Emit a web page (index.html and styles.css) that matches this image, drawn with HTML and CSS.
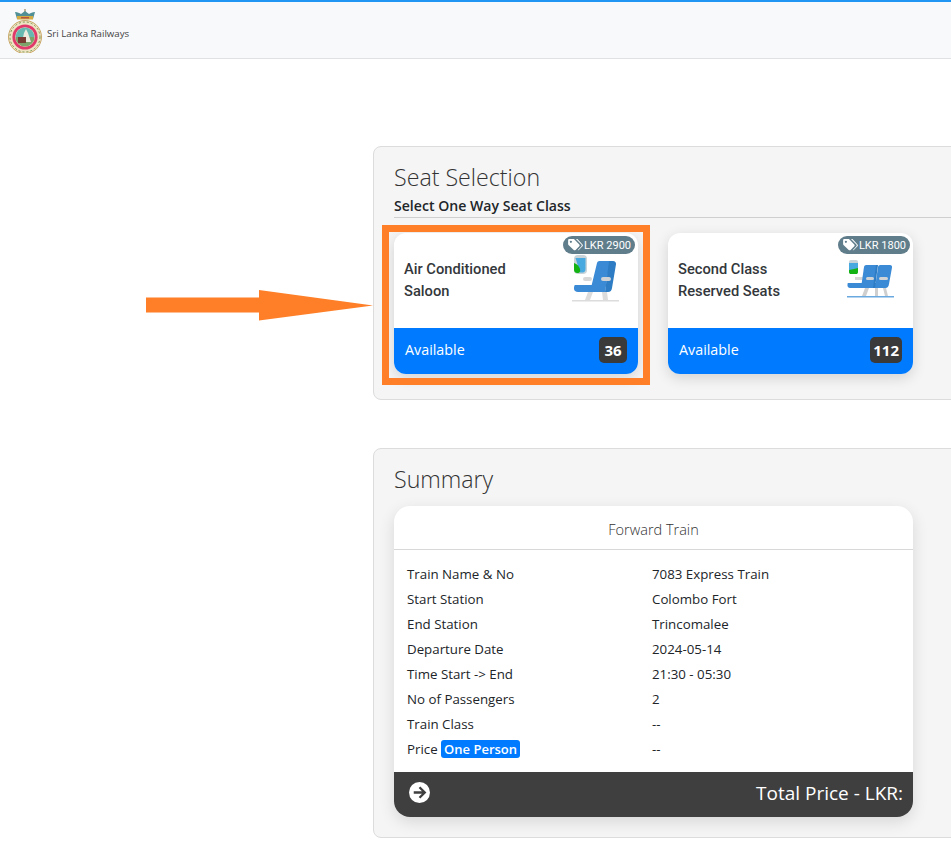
FILE: index.html
```html
<!DOCTYPE html>
<html lang="en">
<head>
<meta charset="utf-8">
<title>Sri Lanka Railways</title>
<link rel="stylesheet" href="styles.css">
</head>
<body>
<header class="topbar">
  <svg class="logo" viewBox="0 0 36 44" width="36" height="44" aria-hidden="true">
    <path d="M18 0v3" stroke="#8a6d3b" stroke-width="1"/>
    <path d="M8 3c3 0 4 1 6 2l4-3 4 3c2-1 3-2 6-2l-2 7H10z" fill="#4f8f95"/>
    <path d="M10 7h16v3.500H10z" fill="#d2ab45"/>
    <path d="M14 8h8v1.500h-8z" fill="#b5533f"/>
    <circle cx="18" cy="28" r="16.500" fill="#efe3c4" stroke="#c9a86a"/>
    <circle cx="18" cy="28" r="15" fill="none" stroke="#7b9a52" stroke-width="1" stroke-dasharray="2 2"/>
    <circle cx="18" cy="28" r="12.600" fill="#e03a6a"/>
    <circle cx="18" cy="28" r="9.800" fill="#f2e8cc"/>
    <path d="M8.500 28a9.500 9.500 0 0 1 19 0z" fill="#66b8b0"/>
    <path d="M8.500 28a9.500 9.500 0 0 0 19 0z" fill="#7da36a"/>
    <path d="M15 33l2-9 2-4 2 4 3 9z" fill="#ece9dd"/>
    <rect x="11" y="28" width="8" height="6" fill="#7a3b34"/>
  </svg>
  <span class="brand">Sri Lanka Railways</span>
</header>

<main class="content">
  <section class="panel panel-seats">
    <h2 class="panel-title">Seat Selection</h2>
    <h3 class="panel-sub">Select One Way Seat Class</h3>
    <div class="class-list">
      <article class="class-card is-marked">
        <div class="class-body">
          <span class="price"><svg class="tag" viewBox="0 0 16 13" width="15" height="12" aria-hidden="true"><path d="M0 1.400C0 .6.6 0 1.400 0h4.200c.4 0 .7.1 1 .4l5.500 5.500c.5.500.5 1.400 0 2l-4 4c-.6.500-1.500.500-2 0L.4 6.400C.1 6.100 0 5.800 0 5.400zM3 4.300a1.200 1.200 0 1 0 0-2.400 1.200 1.200 0 0 0 0 2.400z" fill="#fff"/><path d="M8.500 0h.9c.4 0 .7.1 1 .4l5.200 5.500c.5.500.5 1.400 0 2l-4 4c-.3.300-.8.400-1.200.400l4-4.400c.5-.6.500-1.400 0-1.900z" fill="#fff"/></svg>LKR 2900</span>
          <div class="class-name">Air Conditioned<br>Saloon</div>
          <svg class="seat" viewBox="0 0 50 48" width="50" height="48" aria-hidden="true">
            <rect x="2" y="0" width="13" height="19" rx="4" fill="#c7d3d8"/>
            <path d="M3.500 3h10v11c0 2-1 3.500-3 3.500H8z" fill="#47a9e0"/>
            <path d="M2 8c3 1 5 3 6 6 .5 2 0 4-2 4-3 0-4-1-4-4z" fill="#12b312"/>
            <rect x="11" y="22" width="9" height="4" rx="2" fill="#d8d8d8"/>
            <path d="M16 37h5l-3 8h-5zM30 37h5l1 8h-5z" fill="#dcdcdc"/>
            <rect x="0" y="45" width="47" height="1.500" fill="#dcdcdc"/>
            <path d="M3 30h20v7H6c-2.500 0-4-1.500-4-3.500S2.500 30 3 30z" fill="#3a8ad6"/>
            <path d="M25 8c.3-1.300 1.300-2 2.500-2H38l-5 31H18z" fill="#3a8ad6"/>
            <path d="M37 6h4c2 0 3.300 1.300 3 3.300L40 33c-.4 2.500-1.500 4-4 4h-3z" fill="#2d7cc4"/>
            <rect x="29" y="22" width="10" height="4" rx="2" fill="#cfd3d6"/>
          </svg>
        </div>
        <div class="class-foot">
          <span class="avail">Available</span>
          <span class="count">36</span>
        </div>
      </article>

      <article class="class-card">
        <div class="class-body">
          <span class="price"><svg class="tag" viewBox="0 0 16 13" width="15" height="12" aria-hidden="true"><path d="M0 1.400C0 .6.6 0 1.400 0h4.200c.4 0 .7.1 1 .4l5.500 5.500c.5.500.5 1.400 0 2l-4 4c-.6.500-1.500.500-2 0L.4 6.400C.1 6.100 0 5.800 0 5.400zM3 4.300a1.200 1.200 0 1 0 0-2.400 1.200 1.200 0 0 0 0 2.400z" fill="#fff"/><path d="M8.500 0h.9c.4 0 .7.1 1 .4l5.200 5.500c.5.500.5 1.400 0 2l-4 4c-.3.300-.8.400-1.200.400l4-4.400c.5-.6.500-1.400 0-1.900z" fill="#fff"/></svg>LKR 1800</span>
          <div class="class-name">Second Class<br>Reserved Seats</div>
          <svg class="seat" viewBox="0 0 50 48" width="50" height="48" aria-hidden="true">
            <rect x="2" y="5" width="9" height="14" rx="2" fill="#c7d3d8"/>
            <rect x="2" y="8" width="9" height="7" fill="#47a9e0"/>
            <path d="M2 15l5-1 4-1v4c0 1.500-1 2-2 2H4c-1 0-2-.5-2-2z" fill="#12b312"/>
            <rect x="8" y="22" width="8" height="3" fill="#d8d8d8"/>
            <path d="M18 33h4l-3 8h-4zM28 33h3v8h-3zM36 33h3l2 8h-3z" fill="#cfcfcf"/>
            <rect x="0" y="41" width="47" height="1.500" fill="#6aa9e0"/>
            <path d="M1 28h28v5H3c-1.500 0-2.500-1-2.500-2.500S.5 28 1 28z" fill="#3a8ad6"/>
            <path d="M17 12c.2-1.300 1.100-2 2.300-2H30l-3 23H14z" fill="#3a8ad6"/>
            <path d="M31 12c.2-1.300 1.100-2 2.300-2H43c1.500 0 2.300 1 2 2.500L42 29c-.4 2.500-1.500 4-3.500 4H28z" fill="#3a8ad6"/>
            <path d="M29 10h2l-3 23h-2z" fill="#2d7cc4"/>
            <rect x="19" y="22" width="8" height="3" rx="1.500" fill="#cfd3d6"/>
            <rect x="32" y="22" width="9" height="3" rx="1.500" fill="#cfd3d6"/>
          </svg>
        </div>
        <div class="class-foot">
          <span class="avail">Available</span>
          <span class="count">112</span>
        </div>
      </article>
    </div>
  </section>

  <section class="panel panel-summary">
    <h2 class="panel-title">Summary</h2>
    <div class="summary-card">
      <div class="summary-head">Forward Train</div>
      <dl class="summary-grid">
        <dt>Train Name &amp; No</dt><dd>7083 Express Train</dd>
        <dt>Start Station</dt><dd>Colombo Fort</dd>
        <dt>End Station</dt><dd>Trincomalee</dd>
        <dt>Departure Date</dt><dd>2024-05-14</dd>
        <dt>Time Start -&gt; End</dt><dd>21:30 - 05:30</dd>
        <dt>No of Passengers</dt><dd>2</dd>
        <dt>Train Class</dt><dd>--</dd>
        <dt>Price <span class="pill">One Person</span></dt><dd>--</dd>
      </dl>
      <div class="summary-foot">
        <svg class="go" viewBox="0 0 20 20" width="21" height="21" aria-hidden="true">
          <circle cx="10" cy="10" r="10" fill="#fff"/>
          <path d="M4.500 10h10M10 5l5 5-5 5" fill="none" stroke="#3f3f3f" stroke-width="2.200"/>
        </svg>
        <span class="total">Total Price - LKR:</span>
      </div>
    </div>
  </section>
</main>

<svg class="arrow" viewBox="0 0 227 31" preserveAspectRatio="none" aria-hidden="true">
  <path d="M0 7.500h113V0l114 15.500-114 15v-8H0z" fill="#fe7f27"/>
</svg>
</body>
</html>
```

FILE: styles.css
```css
*, *::after { box-sizing: border-box; }
html, body {
  margin: 0;
  height: 844px;
  overflow: hidden;
  background: #fff;
  color: #212529;
  font-family: "Open Sans", "Noto Sans", sans-serif;
}
body { position: relative; }

.topbar {
  height: 59px;
  display: flex;
  align-items: center;
  gap: 4px;
  padding: 2px 0 0 7px;
  background: #f8f9fa;
  border-top: 2px solid #2196f3;
  border-bottom: 1px solid #dfe1e3;
}
.logo { flex: none; }
.brand {
  font-size: 9.700px;
  color: #444;
  margin-top: 5px;
}

.content {
  width: 620px;
  margin-left: 373px;
  padding-top: 87px;
  display: flex;
  flex-direction: column;
  gap: 48px;
}
.panel {
  background: #f5f5f5;
  border: 1px solid #dcdcdc;
  border-radius: 8px;
  padding: 13px 20px 0;
}
.panel-seats { height: 254px; }
.panel-summary { height: 390px; }
.panel-title {
  margin: 0;
  font-size: 23.200px;
  font-weight: 300;
  line-height: 34px;
  color: #333;
}
.panel-sub {
  margin: 2px 0 0;
  padding-bottom: 2px;
  font-size: 14.100px;
  font-weight: 600;
  line-height: 19px;
  color: #212529;
  border-bottom: 1px solid #cfcfcf;
}

.class-list {
  display: grid;
  grid-template-columns: 244px 245px;
  gap: 30px;
  margin-top: 15px;
}
.class-card {
  position: relative;
  height: 141px;
  border-radius: 12px;
  background: #fff;
  box-shadow: 0 4px 14px rgba(0, 0, 0, .14);
  display: flex;
  flex-direction: column;
}
.class-card.is-marked::after {
  content: "";
  position: absolute;
  left: -12px;
  top: -8px;
  width: 268px;
  height: 160px;
  border: 7px solid #fe7f27;
}
.class-body {
  position: relative;
  flex: 1;
  display: flex;
  justify-content: space-between;
  padding: 25px 16px 0 10px;
}
.class-name {
  font-family: Roboto, "Liberation Sans", sans-serif;
  font-size: 14.700px;
  font-weight: 500;
  line-height: 22px;
  color: #33373b;
}
.seat { flex: none; margin-top: -3px; }
.price {
  position: absolute;
  top: 3px;
  right: 3px;
  height: 18px;
  padding: 0 4px 0 5px;
  display: flex;
  align-items: center;
  gap: 1px;
  border-radius: 9px;
  background: #607d8b;
  color: #fff;
  font-family: Roboto, "Liberation Sans", sans-serif;
  font-size: 11px;
}
.tag { flex: none; }
.class-foot {
  height: 46px;
  display: flex;
  align-items: center;
  justify-content: space-between;
  padding: 0 11px;
  background: #007bff;
  border-radius: 0 0 12px 12px;
  color: #fff;
}
.avail {
  font-size: 14.300px;
  margin-top: -3px;
}
.count {
  min-width: 28px;
  height: 26px;
  padding: 0 3px;
  margin-top: -2px;
  display: flex;
  align-items: center;
  justify-content: center;
  background: #3a3a3a;
  border-radius: 5px;
  font-size: 15px;
  font-weight: 700;
}

.summary-card {
  width: 519px;
  height: 311px;
  margin-top: 10px;
  background: #fff;
  border-radius: 16px;
  box-shadow: 0 5px 16px rgba(0, 0, 0, .12);
  display: flex;
  flex-direction: column;
  overflow: hidden;
}
.summary-head {
  height: 44px;
  padding-top: 4px;
  display: flex;
  align-items: center;
  justify-content: center;
  border-bottom: 1px solid #d8d8d8;
  font-size: 14.500px;
  font-weight: 300;
  color: #333;
}
.summary-grid {
  flex: 1;
  margin: 0;
  padding: 11px 13px 0;
  display: grid;
  grid-template-columns: 245px 1fr;
  grid-auto-rows: 25px;
  align-items: center;
  font-size: 13.300px;
  color: #212529;
}
.summary-grid dt, .summary-grid dd { margin: 0; }
.pill {
  display: inline-block;
  padding: 0 3px;
  background: #007bff;
  border-radius: 3px;
  color: #fff;
  font-size: 13px;
  font-weight: 600;
  line-height: 18px;
}
.summary-foot {
  height: 45px;
  display: flex;
  align-items: center;
  justify-content: space-between;
  padding: 0 10px 4px 15px;
  background: #3f3f3f;
  color: #fff;
}
.total { font-size: 19px; }

.arrow {
  position: absolute;
  left: 146px;
  top: 290px;
  width: 227px;
  height: 31px;
}
```
